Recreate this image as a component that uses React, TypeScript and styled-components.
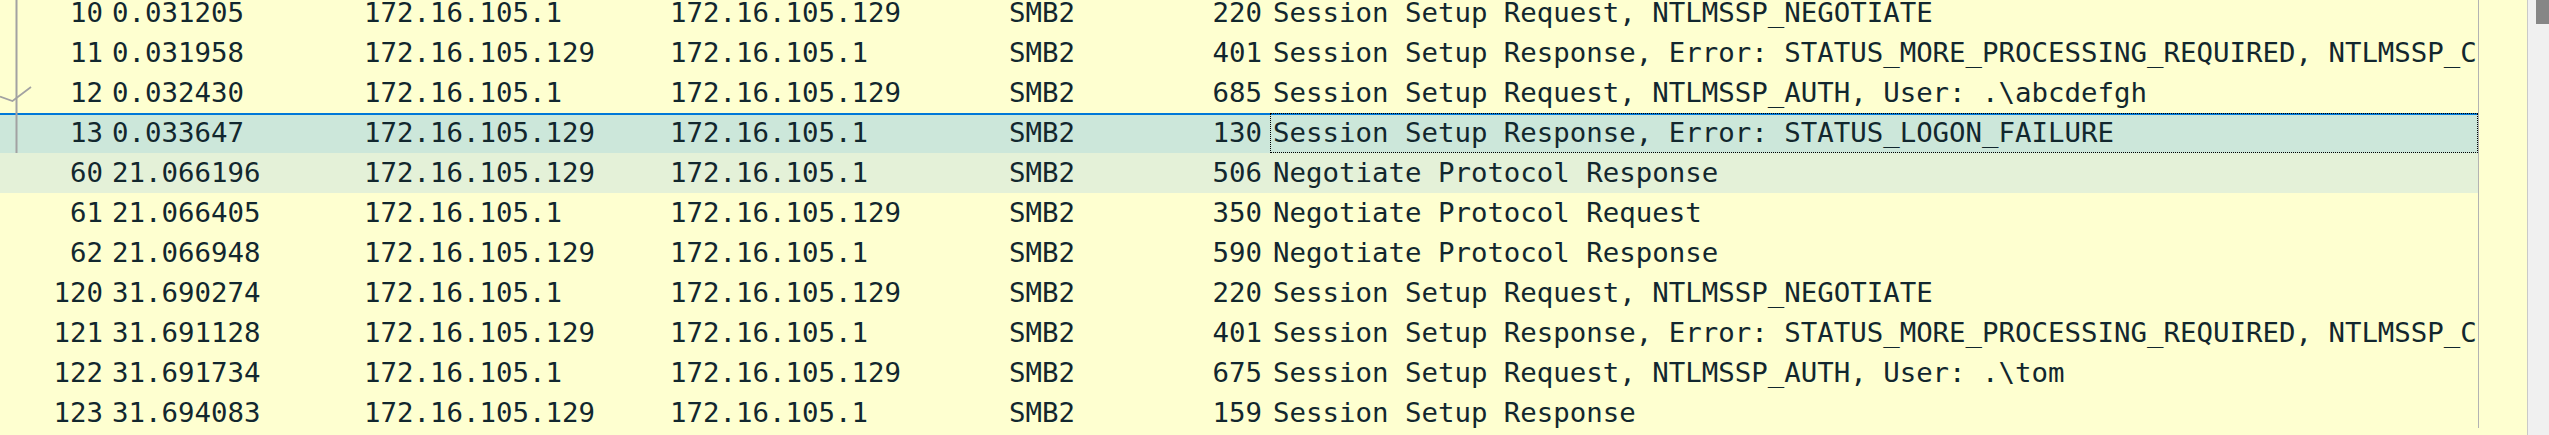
import React from "react";
import styled, { createGlobalStyle } from "styled-components";

const GlobalStyle = createGlobalStyle`
  html, body {
    margin: 0;
    padding: 0;
    background: #feffd0;
    overflow: hidden;
  }
  #root {
    width: 2549px;
    height: 435px;
  }
`;

type RowState = "normal" | "selected" | "hover";

type Packet = {
  no: number;
  time: string;
  src: string;
  dst: string;
  proto: string;
  len: number;
  info: string;
  state?: RowState;
  related?: boolean;
  check?: boolean;
};

const packets: Packet[] = [
  { no: 10, time: "0.031205", src: "172.16.105.1", dst: "172.16.105.129", proto: "SMB2", len: 220, info: "Session Setup Request, NTLMSSP_NEGOTIATE", related: true },
  { no: 11, time: "0.031958", src: "172.16.105.129", dst: "172.16.105.1", proto: "SMB2", len: 401, info: "Session Setup Response, Error: STATUS_MORE_PROCESSING_REQUIRED, NTLMSSP_CHALLENGE", related: true },
  { no: 12, time: "0.032430", src: "172.16.105.1", dst: "172.16.105.129", proto: "SMB2", len: 685, info: "Session Setup Request, NTLMSSP_AUTH, User: .\\abcdefgh", related: true, check: true },
  { no: 13, time: "0.033647", src: "172.16.105.129", dst: "172.16.105.1", proto: "SMB2", len: 130, info: "Session Setup Response, Error: STATUS_LOGON_FAILURE", related: true, state: "selected" },
  { no: 60, time: "21.066196", src: "172.16.105.129", dst: "172.16.105.1", proto: "SMB2", len: 506, info: "Negotiate Protocol Response", state: "hover" },
  { no: 61, time: "21.066405", src: "172.16.105.1", dst: "172.16.105.129", proto: "SMB2", len: 350, info: "Negotiate Protocol Request" },
  { no: 62, time: "21.066948", src: "172.16.105.129", dst: "172.16.105.1", proto: "SMB2", len: 590, info: "Negotiate Protocol Response" },
  { no: 120, time: "31.690274", src: "172.16.105.1", dst: "172.16.105.129", proto: "SMB2", len: 220, info: "Session Setup Request, NTLMSSP_NEGOTIATE" },
  { no: 121, time: "31.691128", src: "172.16.105.129", dst: "172.16.105.1", proto: "SMB2", len: 401, info: "Session Setup Response, Error: STATUS_MORE_PROCESSING_REQUIRED, NTLMSSP_CHALLENGE" },
  { no: 122, time: "31.691734", src: "172.16.105.1", dst: "172.16.105.129", proto: "SMB2", len: 675, info: "Session Setup Request, NTLMSSP_AUTH, User: .\\tom" },
  { no: 123, time: "31.694083", src: "172.16.105.129", dst: "172.16.105.1", proto: "SMB2", len: 159, info: "Session Setup Response" },
];

const rowBg: Record<RowState, string> = {
  normal: "#feffd0",
  selected: "#cce7da",
  hover: "#e4f1d8",
};

const Frame = styled.div`
  display: flex;
  width: 2549px;
  height: 435px;
  overflow: hidden;
  background: #feffd0;
  font-family: "DejaVu Sans Mono", "Liberation Mono", monospace;
  font-size: 27.4px;
  color: #12272e;
`;

const Viewport = styled.div`
  flex: 0 0 2527px;
  height: 100%;
  overflow: hidden;
  background: #feffd0;
`;

const Table = styled.div`
  width: 2479px;
  height: 100%;
  box-sizing: border-box;
  border-right: 1px solid #b3b3b3;
`;

const Body = styled.div`
  margin-top: -7px;
`;

const Row = styled.div<{ $state: RowState }>`
  display: grid;
  grid-template-columns: 108px 253px 306px 338px 107px 158px 1208px;
  height: 40px;
  line-height: 40px;
  white-space: nowrap;
  background: ${(p) => rowBg[p.$state]};
  box-shadow: ${(p) => (p.$state === "selected" ? "inset 0 2px 0 #0078d7" : "none")};
`;

const NoCell = styled.div`
  display: flex;
  overflow: hidden;
`;

const Related = styled.svg`
  flex: none;
  display: block;
`;

const NoText = styled.span`
  flex: 1;
  text-align: right;
  padding-right: 5px;
`;

const TimeCell = styled.div`
  overflow: hidden;
  padding-left: 4px;
`;

const AddrCell = styled.div`
  overflow: hidden;
  padding-left: 3px;
`;

const ProtoCell = styled.div`
  overflow: hidden;
  padding-left: 4px;
`;

const LenCell = styled.div`
  overflow: hidden;
  text-align: right;
  padding-right: 8px;
`;

const InfoCell = styled.div<{ $focused: boolean }>`
  box-sizing: border-box;
  overflow: hidden;
  height: 40px;
  line-height: 38px;
  padding-left: 2px;
  border: 1px dotted ${(p) => (p.$focused ? "#000000" : "transparent")};
`;

const ScrollTrack = styled.div`
  flex: 1;
  height: 100%;
  border-left: 1px solid #c9c9c9;
  background: #f0f0f0;
  padding-left: 8px;
`;

const Thumb = styled.div`
  height: 24px;
  background: #868686;
`;

function RelatedMark({ line, check }: { line?: boolean; check?: boolean }) {
  return (
    <Related width="36" height="40" viewBox="0 0 36 40">
      {line && <rect x="15.5" y="0" width="2" height="40" fill="#a2a2a2" />}
      {check && (
        <polyline
          points="0,23.5 12.5,28 31,14"
          fill="none"
          stroke="#a2a2a2"
          strokeWidth="1.7"
          strokeLinejoin="miter"
        />
      )}
    </Related>
  );
}

export default function App() {
  return (
    <>
      <GlobalStyle />
      <Frame>
        <Viewport>
          <Table>
            <Body>
              {packets.map((p) => {
                const state = p.state ?? "normal";
                return (
                  <Row key={p.no} $state={state}>
                    <NoCell>
                      <RelatedMark line={p.related} check={p.check} />
                      <NoText>{p.no}</NoText>
                    </NoCell>
                    <TimeCell>{p.time}</TimeCell>
                    <AddrCell>{p.src}</AddrCell>
                    <AddrCell>{p.dst}</AddrCell>
                    <ProtoCell>{p.proto}</ProtoCell>
                    <LenCell>{p.len}</LenCell>
                    <InfoCell $focused={state === "selected"}>{p.info}</InfoCell>
                  </Row>
                );
              })}
            </Body>
          </Table>
        </Viewport>
        <ScrollTrack>
          <Thumb />
        </ScrollTrack>
      </Frame>
    </>
  );
}
